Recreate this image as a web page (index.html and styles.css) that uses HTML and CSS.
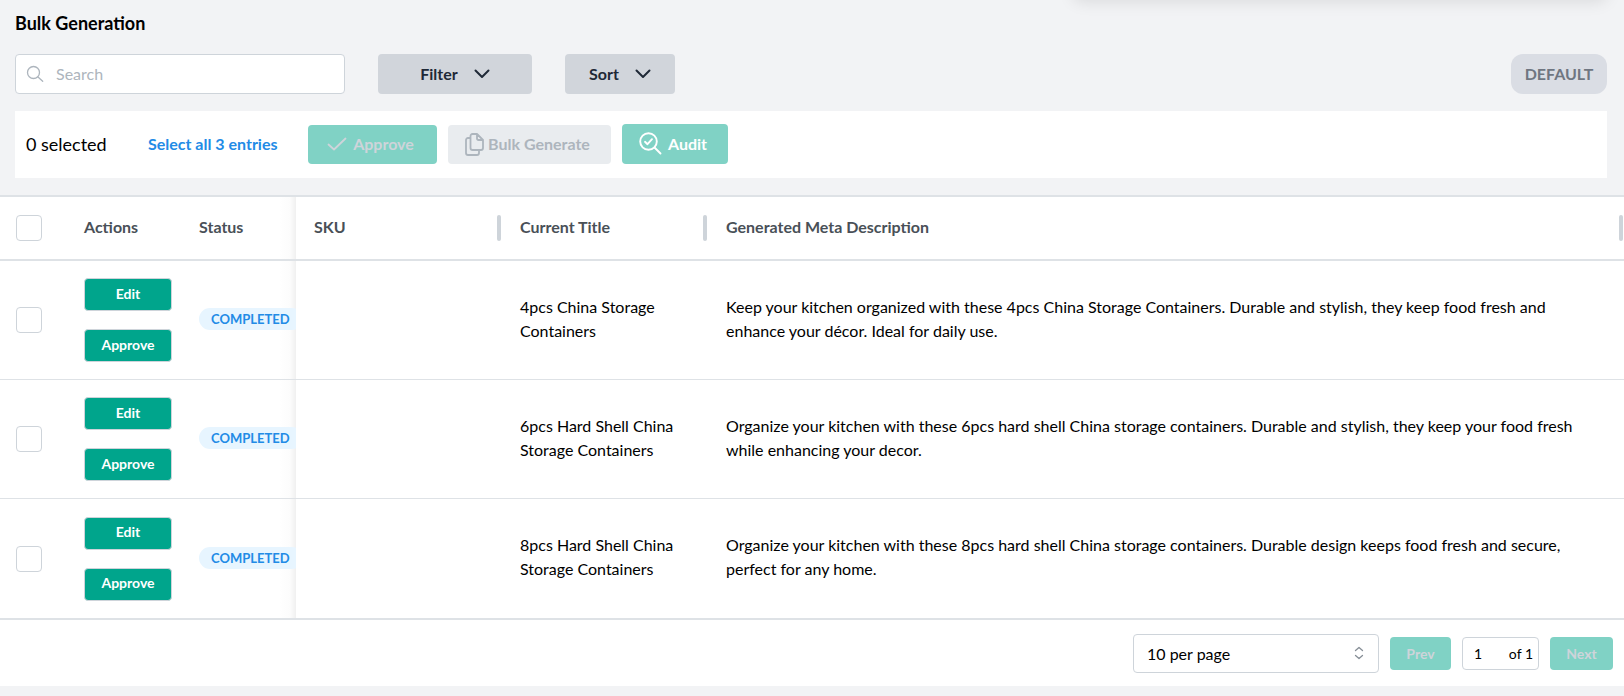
FILE: index.html
```html
<!DOCTYPE html>
<html lang="en">
<head>
<meta charset="utf-8">
<title>Bulk Generation</title>
<link rel="stylesheet" href="styles.css">
</head>
<body>
<div class="top-panel"></div>
<header class="page-head">
  <h1 class="title">Bulk Generation</h1>
  <div class="toolbar">
    <label class="search">
      <svg width="18" height="18" viewBox="0 0 18 18" fill="none" stroke="#adb5bd" stroke-width="1.3" stroke-linecap="round"><circle cx="7.5" cy="7.5" r="6"/><path d="M12 12l4.700 4.300"/></svg>
      <input type="text" placeholder="Search" aria-label="Search">
    </label>
    <button class="menu-btn filter" type="button">Filter
      <svg width="16" height="10" viewBox="0 0 16 10" fill="none" stroke="#1f2937" stroke-width="2" stroke-linecap="round" stroke-linejoin="round"><path d="M1.500 1.500L8 8l6.500-6.500"/></svg>
    </button>
    <button class="menu-btn sort" type="button">Sort
      <svg width="16" height="10" viewBox="0 0 16 10" fill="none" stroke="#1f2937" stroke-width="2" stroke-linecap="round" stroke-linejoin="round"><path d="M1.500 1.500L8 8l6.500-6.500"/></svg>
    </button>
    <button class="default-btn" type="button">DEFAULT</button>
  </div>
  <div class="bulk-bar">
    <span class="count">0 selected</span>
    <a class="select-all" href="#">Select all 3 entries</a>
    <div class="bulk-actions">
      <button class="bulk-btn approve-all" type="button" disabled>
        <svg width="20" height="14" viewBox="0 0 20 14" fill="none" stroke="currentColor" stroke-width="1.800" stroke-linecap="round" stroke-linejoin="round"><path d="M1.500 7.500L7 12.500 18.500 1.500"/></svg>
        Approve
      </button>
      <button class="bulk-btn generate" type="button" disabled>
        <svg width="19" height="23" viewBox="0 0 19 23" fill="none" stroke="currentColor" stroke-width="1.800" stroke-linejoin="round"><path d="M12 1H7.500a2 2 0 0 0-2 2v12a2 2 0 0 0 2 2H16a2 2 0 0 0 2-2V7zM12 1v4.500q0 1.500 1.500 1.500H18M5.500 5H3a2 2 0 0 0-2 2v13a2 2 0 0 0 2 2h9a2 2 0 0 0 2-2v-3"/></svg>
        Bulk Generate
      </button>
      <button class="bulk-btn audit" type="button">
        <svg width="23" height="23" viewBox="0 0 23 23" fill="none" stroke="#fff" stroke-width="1.900" stroke-linecap="round" stroke-linejoin="round"><circle cx="9.500" cy="9.500" r="8.300"/><path d="M15.500 15.500l6 6M6 9.800l2.500 2.400 4.500-5"/></svg>
        Audit
      </button>
    </div>
  </div>
</header>
<main>
  <table class="grid">
    <colgroup><col class="c-check"><col class="c-mid"><col class="c-mid"><col class="c-wide"><col class="c-wide"><col></colgroup>
    <thead>
      <tr>
        <th><input class="check" type="checkbox" aria-label="Select all rows"></th>
        <th><span class="head-cell"><span class="head-text">Actions</span></span></th>
        <th class="pinned"><span class="head-cell"><span class="head-text">Status</span></span></th>
        <th><span class="head-cell"><span class="head-text">SKU</span><i class="handle"></i></span></th>
        <th><span class="head-cell"><span class="head-text">Current Title</span><i class="handle"></i></span></th>
        <th><span class="head-cell"><span class="head-text">Generated Meta Description</span><i class="handle"></i></span></th>
      </tr>
    </thead>
    <tbody>
      <tr>
        <td><input class="check" type="checkbox" aria-label="Select row 1"></td>
        <td><div class="row-actions"><button type="button">Edit</button><button type="button">Approve</button></div></td>
        <td class="pinned"><span class="badge">COMPLETED</span></td>
        <td class="text"></td>
        <td class="text">4pcs China Storage Containers</td>
        <td class="text">Keep your kitchen organized with these 4pcs China Storage Containers. Durable and stylish, they keep food fresh and enhance your décor. Ideal for daily use.</td>
      </tr>
      <tr>
        <td><input class="check" type="checkbox" aria-label="Select row 2"></td>
        <td><div class="row-actions"><button type="button">Edit</button><button type="button">Approve</button></div></td>
        <td class="pinned"><span class="badge">COMPLETED</span></td>
        <td class="text"></td>
        <td class="text">6pcs Hard Shell China Storage Containers</td>
        <td class="text">Organize your kitchen with these 6pcs hard shell China storage containers. Durable and stylish, they keep your food fresh while enhancing your decor.</td>
      </tr>
      <tr>
        <td><input class="check" type="checkbox" aria-label="Select row 3"></td>
        <td><div class="row-actions"><button type="button">Edit</button><button type="button">Approve</button></div></td>
        <td class="pinned"><span class="badge">COMPLETED</span></td>
        <td class="text"></td>
        <td class="text">8pcs Hard Shell China Storage Containers</td>
        <td class="text">Organize your kitchen with these 8pcs hard shell China storage containers. Durable design keeps food fresh and secure, perfect for any home.</td>
      </tr>
    </tbody>
  </table>
  <nav class="pager" aria-label="Pagination">
    <div class="page-size">
      <select aria-label="Rows per page"><option>10 per page</option></select>
      <svg width="10" height="14" viewBox="0 0 10 14" fill="none" stroke="#868e96" stroke-width="1.300" stroke-linecap="round" stroke-linejoin="round"><path d="M1.500 4.500L5 1.500l3.500 3M1.500 9.500L5 12.500l3.500-3"/></svg>
    </div>
    <button class="step prev" type="button" disabled>Prev</button>
    <label class="page-no"><input type="text" value="1" aria-label="Page number"><span>of 1</span></label>
    <button class="step next" type="button" disabled>Next</button>
  </nav>
</main>
</body>
</html>
```

FILE: styles.css
```css
* { box-sizing: border-box; }

body {
  margin: 0;
  background: #f2f3f5;
  color: #000;
  font: 16px/24px Lato, "Open Sans", sans-serif;
}

button, input, select { font: inherit; margin: 0; }
button { border: 0; padding: 0; cursor: pointer; }

/* Bottom shadow of the panel that floats above the page */
.top-panel {
  position: absolute;
  top: -22px;
  right: 16px;
  width: 536px;
  height: 20px;
  border-radius: 12px;
  box-shadow: 0 4px 16px rgba(0, 0, 0, 0.1);
}

.page-head { padding: 11px 17px 17px 15px; }

.title {
  margin: 0 0 19px;
  font-size: 18px;
  line-height: 24px;
  font-weight: 700;
}

.toolbar { display: flex; align-items: center; }

.search {
  display: flex;
  align-items: center;
  gap: 12px;
  width: 330px;
  height: 40px;
  padding: 0 10px;
  background: #fff;
  border: 1px solid #ced4da;
  border-radius: 4px;
}
.search input {
  flex: 1;
  min-width: 0;
  border: 0;
  padding: 0;
  outline: 0;
  background: none;
}
.search input::placeholder { color: #adb5bd; opacity: 1; }

.menu-btn {
  display: flex;
  align-items: center;
  justify-content: center;
  gap: 16px;
  height: 40px;
  margin-left: 33px;
  border-radius: 4px;
  background: #d1d5db;
  color: #1f2937;
  font-weight: 700;
}
.filter { width: 154px; }
.sort { width: 110px; }

.default-btn {
  height: 40px;
  width: 96px;
  margin-left: auto;
  border-radius: 12px;
  background: #dadde4;
  color: #6f7681;
  font-weight: 700;
}

.bulk-bar {
  display: flex;
  align-items: center;
  height: 67px;
  margin-top: 17px;
  padding: 0 11px 2px;
  background: #fff;
}
.count { width: 122px; font-size: 18px; }
.select-all {
  width: 160px;
  color: #228be6;
  font-weight: 700;
  text-decoration: none;
}

.bulk-actions { display: flex; align-items: flex-end; gap: 11px; }
.bulk-btn {
  display: flex;
  align-items: center;
  justify-content: center;
  height: 39px;
  padding-right: 4px;
  border-radius: 4px;
  font-weight: 700;
}
.approve-all { width: 129px; gap: 6px; background: #80d2c5; color: #ced4da; }
.generate { width: 163px; gap: 4px; background: #e9ecef; color: #adb5bd; }
.audit { width: 106px; height: 40px; gap: 6px; background: #80d2c5; color: #fff; }

.grid {
  width: 100%;
  table-layout: fixed;
  border-collapse: separate;
  border-spacing: 0;
  background: #fff;
  border-top: 2px solid #dee2e6;
  border-bottom: 2px solid #dee2e6;
}
.c-check { width: 66px; }
.c-mid { width: 115px; }
.c-wide { width: 206px; }

.grid th, .grid td {
  padding: 0 16px 0 18px;
  text-align: left;
  vertical-align: middle;
}
.grid th {
  height: 64px;
  padding-right: 1px;
  border-bottom: 2px solid #dee2e6;
  color: #495057;
  font-weight: 700;
}
.grid td { height: 119px; border-bottom: 1px solid #dee2e6; }
.grid td.text { padding-bottom: 3px; }
.grid tr:last-child td { border-bottom: 0; }
.grid th:first-child, .grid td:first-child { padding: 0 0 0 16px; }
.grid th.pinned, .grid td.pinned {
  overflow: hidden;
  white-space: nowrap;
  padding-right: 0;
  background: linear-gradient(to left, #f0f0f0, #fcfcfc 6px, #fff 16px);
}
.grid td.pinned { padding-bottom: 2px; }

.head-cell { display: flex; align-items: center; justify-content: space-between; }
.head-text { padding-bottom: 3px; }
.handle { width: 4px; height: 26px; border-radius: 2px; background: #ced4da; }

.check {
  display: block;
  appearance: none;
  width: 26px;
  height: 26px;
  border: 1px solid #ced4da;
  border-radius: 4px;
  background: #fff;
}

.row-actions { display: flex; flex-direction: column; gap: 18px; width: 88px; }
.row-actions button {
  height: 33px;
  padding-bottom: 2px;
  border: 1px solid #ced4da;
  border-radius: 4px;
  background: #00a58c;
  color: #fff;
  font-size: 14px;
  font-weight: 700;
}

.badge {
  display: block;
  width: 104px;
  height: 22px;
  padding: 0 12px;
  border-radius: 11px;
  background: #e7f5ff;
  color: #228be6;
  font-size: 13px;
  line-height: 22px;
  font-weight: 700;
}

.pager {
  display: flex;
  align-items: center;
  justify-content: flex-end;
  gap: 11px;
  padding: 14px 11px 13px;
  background: #fff;
}
.page-size { position: relative; width: 246px; }
.page-size select {
  display: block;
  width: 100%;
  height: 39px;
  padding: 0 13px;
  appearance: none;
  border: 1px solid #ced4da;
  border-radius: 4px;
  background: #fff;
  color: #000;
}
.page-size svg { position: absolute; right: 15px; top: 12px; pointer-events: none; }

.step {
  height: 33px;
  border-radius: 4px;
  background: #80d2c5;
  color: #ced4da;
  font-size: 14px;
  font-weight: 700;
}
.prev { width: 61px; }
.next { width: 63px; }
.page-no {
  display: flex;
  align-items: center;
  width: 77px;
  height: 33px;
  padding: 0 5px 0 11px;
  border: 1px solid #ced4da;
  border-radius: 4px;
  background: #fff;
  font-size: 14px;
}
.page-no input { flex: 1; min-width: 0; border: 0; padding: 0; background: none; color: #000; }
.page-no span { white-space: nowrap; }
```
